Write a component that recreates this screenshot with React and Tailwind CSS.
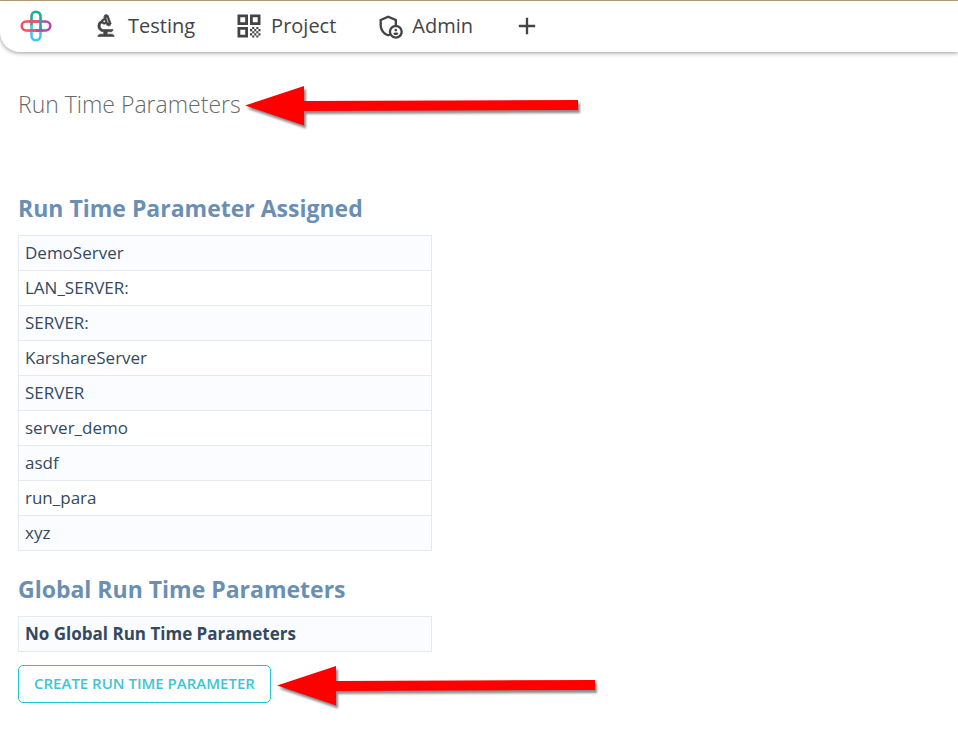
import { MdOutlineBiotech, MdOutlineAdminPanelSettings, MdAdd } from "react-icons/md";

const assigned = [
  "DemoServer",
  "LAN_SERVER:",
  "SERVER:",
  "KarshareServer",
  "SERVER",
  "server_demo",
  "asdf",
  "run_para",
  "xyz",
];

function Logo() {
  return (
    <svg viewBox="0 0 32 32" className="size-8" fill="none" strokeWidth="2.6" aria-hidden="true">
      <path d="M16 11.500H6.200a4.500 4.500 0 0 0 0 9H16" stroke="#ee5361" />
      <path d="M16 11.500h9.800a4.500 4.500 0 0 1 0 9H16" stroke="#b44aa6" />
      <path d="M11.500 20.500v5.300a4.500 4.500 0 0 0 9 0V16" stroke="#45c3f5" />
      <path d="M11.500 16V6.200a4.500 4.500 0 0 1 9 0V20" stroke="#1cae94" />
      <path d="M11.500 15v6" stroke="#45c3f5" />
      <path d="M9 11.500h9" stroke="#ee5361" />
      <path d="M9 20.500h7" stroke="#ee5361" />
      <path d="M16 20.500h7" stroke="#b44aa6" />
    </svg>
  );
}

function MicroscopeIcon() {
  return (
    <MdOutlineBiotech
      className="size-7 [&>path[fill=none]]:stroke-none"
      stroke="currentColor"
      strokeWidth="0.5"
      aria-hidden="true"
    />
  );
}

function QrIcon() {
  return (
    <svg viewBox="0 0 28 28" className="size-7" fill="currentColor" aria-hidden="true">
      <g fill="none" stroke="currentColor" strokeWidth="2.8">
        <path d="M3.900 3.900h7.700v7.700H3.900zM16.400 3.900h7.700v7.700h-7.700zM3.900 16.400h7.700v7.700H3.900z" />
      </g>
      <path d="M17.200 15h2.100v2.100h-2.100zM21.300 15h2.100v2.100h-2.100zM15 17.100h2.200v2.100H15zM19.300 17.100h2v2.100h-2zM23.400 17.100h2.100v2.100h-2.100zM17.200 19.200h2.100v2.100h-2.100zM21.300 19.200h2.100v2.100h-2.100zM15 21.300h2.200v2.100H15zM19.300 21.300h2v2.100h-2zM23.400 21.300h2.100v2.100h-2.100zM17.200 23.400h2.100v2.100h-2.100zM21.300 23.400h2.100v2.100h-2.100z" />
    </svg>
  );
}

function AdminIcon() {
  return <MdOutlineAdminPanelSettings className="size-7" aria-hidden="true" />;
}

function NavLink({ icon: Icon, children }) {
  return (
    <a href="#" className="ml-10 flex items-center gap-2">
      <Icon />
      {children}
    </a>
  );
}

function Arrow({ length }) {
  return (
    <svg
      viewBox={`0 0 ${length} 56`}
      width={length}
      height="56"
      className="drop-shadow-[2px_3px_1px_rgba(0,0,0,0.45)]"
      aria-hidden="true"
    >
      <path d={`M0 29.500 59 10v15L${length} 24v10L59 35v14.500z`} fill="#ff0000" />
    </svg>
  );
}

function ParameterTable({ label, rows, bold }) {
  return (
    <table aria-label={label} className="mt-[11px] w-full max-w-[414px] border-collapse">
      <tbody>
        {rows.map((row) => (
          <tr key={row} className="odd:bg-[#fafcff]">
            <td className={`h-[35px] border border-[#e4eaee] px-1.5 leading-6 ${bold ? "font-bold" : ""}`}>{row}</td>
          </tr>
        ))}
      </tbody>
    </table>
  );
}

export default function App() {
  return (
    <div className="min-h-screen bg-white font-['Open_Sans','Noto_Sans',sans-serif] text-[17px] text-[#34495e]">
      <header className="border-t border-[#c8aa80]">
        <nav className="flex h-[51px] items-center rounded-bl-[20px] bg-white pb-0.5 pl-5 text-xl text-[#444] shadow-[0_1px_4px_rgba(0,0,0,0.4)]">
          <a href="#" aria-label="Home">
            <Logo />
          </a>
          <NavLink icon={MicroscopeIcon}>Testing</NavLink>
          <NavLink icon={QrIcon}>Project</NavLink>
          <NavLink icon={AdminIcon}>Admin</NavLink>
          <button type="button" aria-label="Add" className="ml-10">
            <MdAdd className="size-7" />
          </button>
        </nav>
      </header>
      <main className="px-[18px] pb-7">
        <div className="flex h-[104px] items-center gap-1">
          <h1 className="text-[23px] font-light text-[#676a6c]">Run Time Parameters</h1>
          <Arrow length={333} />
        </div>
        <section className="pt-9">
          <h2 className="text-[23px] leading-8 font-bold text-[#6b8fb3]">Run Time Parameter Assigned</h2>
          <ParameterTable label="Run Time Parameter Assigned" rows={assigned} />
        </section>
        <section className="pt-[22px]">
          <h2 className="text-[23px] leading-8 font-bold text-[#6b8fb3]">Global Run Time Parameters</h2>
          <ParameterTable label="Global Run Time Parameters" rows={["No Global Run Time Parameters"]} bold />
          <div className="mt-1 flex items-center gap-1.5">
            <button type="button" className="h-[38px] rounded-[5px] border border-[#23c6d0] px-[15px] pb-0.5 text-[15px] font-semibold text-[#3fc4d2]">
              CREATE RUN TIME PARAMETER
            </button>
            <Arrow length={318} />
          </div>
        </section>
      </main>
    </div>
  );
}
